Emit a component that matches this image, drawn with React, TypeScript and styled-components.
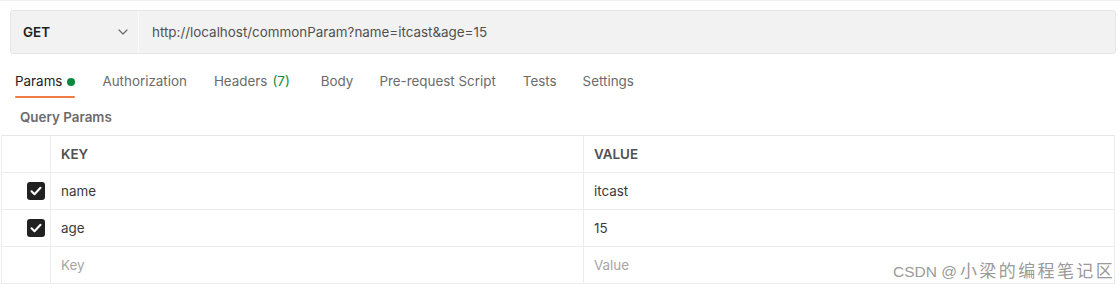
import React from "react";
import styled, { createGlobalStyle } from "styled-components";

const Global = createGlobalStyle`
  html, body { margin: 0; padding: 0; background: #fff; }
  body { font-family: Inter, "Noto Sans", "Liberation Sans", sans-serif; color: #212121; }
  * { box-sizing: border-box; }
`;

const Page = styled.div`
  width: 1120px;
  height: 288px;
  position: relative;
  overflow: hidden;
  border-top: 1px solid #f0f0f0;
  padding: 9px 4px 0 0;
`;

const UrlBar = styled.div`
  margin-left: 10px;
  height: 44px;
  display: flex;
  background: #f2f2f2;
  border: 1px solid #e6e6e6;
  border-radius: 3px;
`;

const Method = styled.div`
  width: 128px;
  display: flex;
  align-items: center;
  justify-content: space-between;
  padding: 0 10px 0 12px;
  border-right: 1px solid #fafafa;
  font-weight: 600;
  font-size: 13.4px;
  color: #212121;
`;

const UrlText = styled.div`
  display: flex;
  align-items: center;
  padding-left: 13px;
  font-size: 13.4px;
  color: #505050;
`;

const Tabs = styled.div`
  display: flex;
  align-items: flex-start;
  height: 45px;
  padding: 19px 0 0 15px;
`;

const Tab = styled.div<{ $active?: boolean; $gap: number }>`
  position: relative;
  margin-right: ${(p) => p.$gap}px;
  font-size: 13.4px;
  color: ${(p) => (p.$active ? "#212121" : "#6b6b6b")};
  height: 26px;
  display: flex;
  align-items: flex-start;
  gap: 5px;
  ${(p) =>
    p.$active &&
    `&::after { content: ""; position: absolute; left: 0; right: 0; bottom: 1px; height: 2px; background: #ef7a46; border-radius: 1px; }`}
`;

const Dot = styled.span`
  width: 8px;
  height: 8px;
  border-radius: 50%;
  background: #0a8a3e;
  margin-top: 5px;
`;

const Count = styled.span`
  color: #0a8a3e;
`;

const SectionTitle = styled.div`
  font-size: 13.4px;
  font-weight: 600;
  color: #6b6b6b;
  padding: 10px 0 0 20px;
  height: 36px;
`;

const Table = styled.div`
  margin: 0 0 0 1px;
  width: 1114px;
  border-top: 1px solid #e6e6e6;
  border-left: 1px solid #ececec;
  border-right: 1px solid #ececec;
`;

const Row = styled.div`
  display: grid;
  grid-template-columns: 48px 533px 1fr;
  height: 37px;
  border-bottom: 1px solid #ececec;
`;

const Cell = styled.div<{ $head?: boolean; $placeholder?: boolean }>`
  display: flex;
  align-items: center;
  padding-left: 10px;
  border-left: 1px solid #ececec;
  font-size: 13.4px;
  font-weight: ${(p) => (p.$head ? 600 : 400)};
  color: ${(p) => (p.$placeholder ? "#a6a6a6" : p.$head ? "#505050" : "#3a3a3a")};
`;

const CheckCell = styled.div`
  display: flex;
  align-items: center;
  justify-content: flex-end;
  padding-right: 5px;
`;

const Check = styled.div`
  width: 18px;
  height: 18px;
  border-radius: 3px;
  background: #212121;
  display: flex;
  align-items: center;
  justify-content: center;
`;

const Watermark = styled.div`
  position: absolute;
  left: 893px;
  top: 256px;
  display: flex;
  align-items: baseline;
  font-family: "Liberation Sans", "Noto Sans CJK SC", sans-serif;
  font-size: 15.5px;
  color: #9a9a9a;
  white-space: nowrap;
`;

const WatermarkCjk = styled.span`
  font-family: "Noto Sans CJK SC", sans-serif;
  font-size: 17px;
  letter-spacing: 2.4px;
  margin-left: 3px;
`;

const Chevron = () => (
  <svg width="10" height="6" viewBox="0 0 10 6" fill="none">
    <path d="M1 1l4 4 4-4" stroke="#6b6b6b" strokeWidth="1.2" strokeLinecap="round" strokeLinejoin="round" />
  </svg>
);

const CheckBox = () => (
  <Check>
    <svg width="12" height="10" viewBox="0 0 12 10" fill="none">
      <path d="M1.5 5.2l3 3 6-6.5" stroke="#fff" strokeWidth="2" strokeLinecap="round" strokeLinejoin="round" />
    </svg>
  </Check>
);

const tabs = [
  { label: "Authorization", gap: 27 },
  { label: "Headers", gap: 31, count: "(7)" },
  { label: "Body", gap: 26 },
  { label: "Pre-request Script", gap: 27 },
  { label: "Tests", gap: 26 },
  { label: "Settings", gap: 0 },
];

const rows = [
  { key: "name", value: "itcast", checked: true },
  { key: "age", value: "15", checked: true },
];

export default function App() {
  return (
    <Page>
      <Global />
      <UrlBar>
        <Method>
          GET
          <Chevron />
        </Method>
        <UrlText>http://localhost/commonParam?name=itcast&amp;age=15</UrlText>
      </UrlBar>
      <Tabs>
        <Tab $active $gap={27}>
          Params
          <Dot />
        </Tab>
        {tabs.map((t) => (
          <Tab key={t.label} $gap={t.gap}>
            {t.label}
            {t.count && <Count>{t.count}</Count>}
          </Tab>
        ))}
      </Tabs>
      <SectionTitle>Query Params</SectionTitle>
      <Table>
        <Row>
          <CheckCell />
          <Cell $head>KEY</Cell>
          <Cell $head>VALUE</Cell>
        </Row>
        {rows.map((r) => (
          <Row key={r.key}>
            <CheckCell>{r.checked && <CheckBox />}</CheckCell>
            <Cell>{r.key}</Cell>
            <Cell>{r.value}</Cell>
          </Row>
        ))}
        <Row>
          <CheckCell />
          <Cell $placeholder>Key</Cell>
          <Cell $placeholder>Value</Cell>
        </Row>
      </Table>
      <Watermark>
        CSDN @<WatermarkCjk>小梁的编程笔记区</WatermarkCjk>
      </Watermark>
    </Page>
  );
}
